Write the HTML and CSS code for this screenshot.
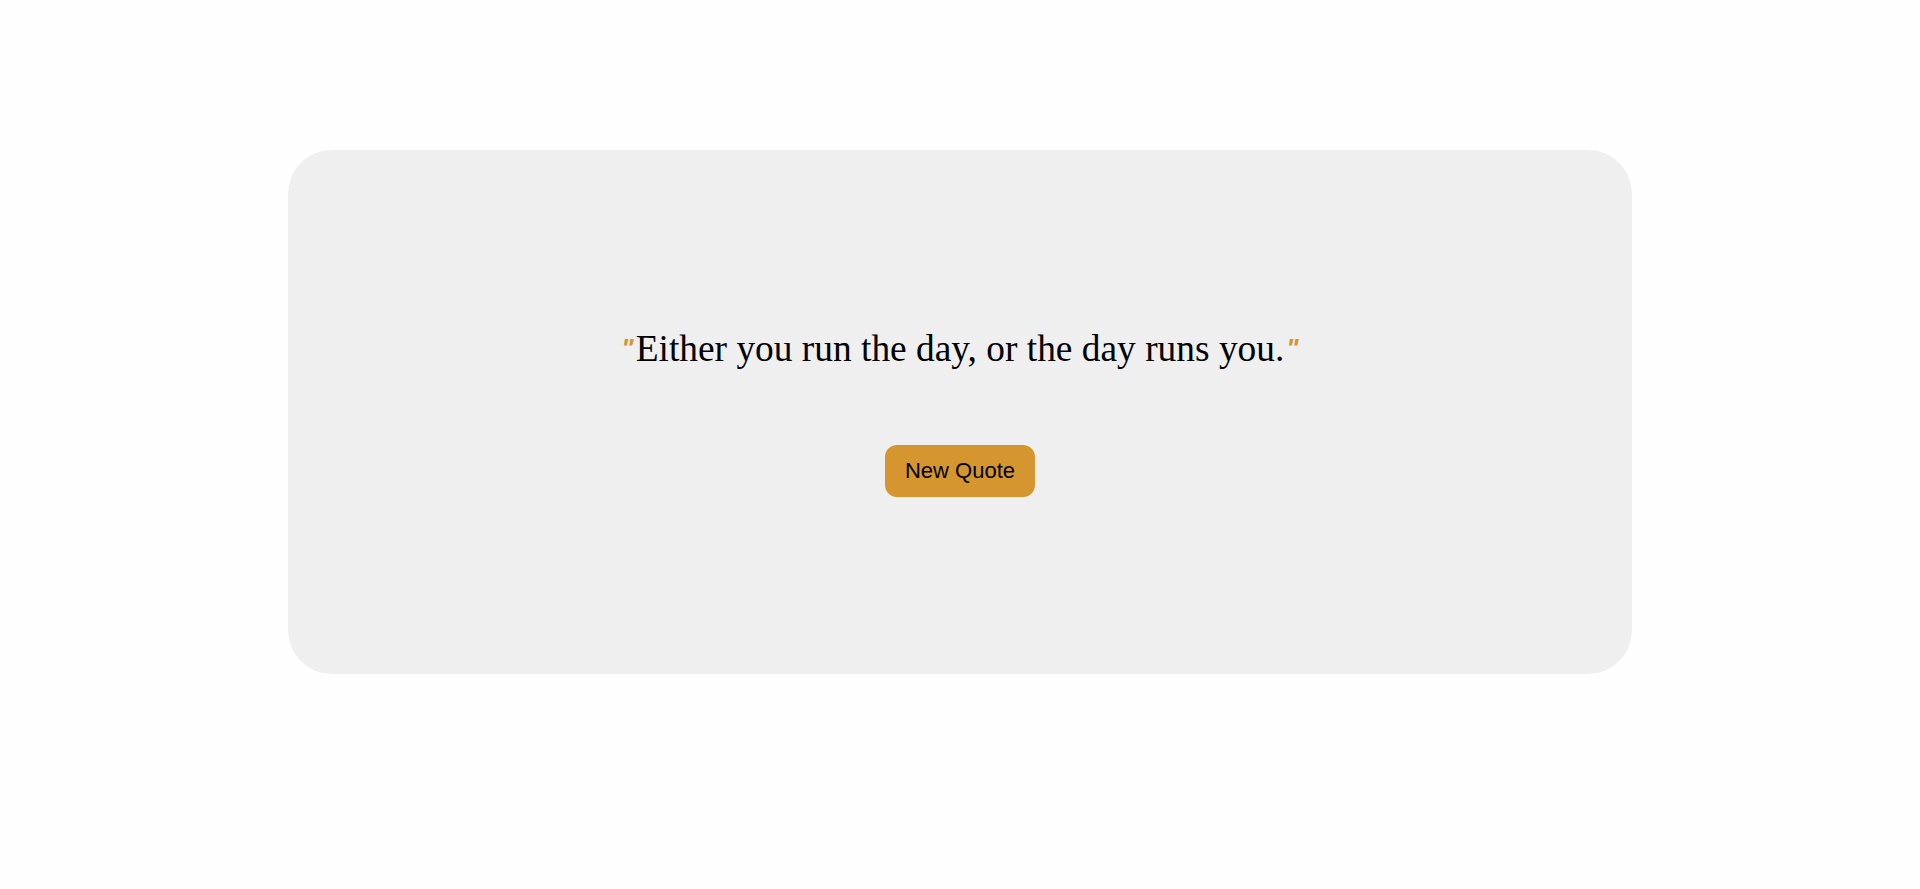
FILE: index.html
```html
<!DOCTYPE html>
<html lang="en">
<head>
<meta charset="utf-8">
<title>Quote Generator</title>
<link rel="stylesheet" href="styles.css">
</head>
<body>
<main class="card">
  <p class="quote"><span class="mark">"</span>Either you run the day, or the day runs you.<span class="mark">"</span></p>
  <button class="btn">New Quote</button>
</main>
</body>
</html>
```

FILE: styles.css
```css
html, body {
  margin: 0;
  padding: 0;
  background: #fefefe;
}
body {
  padding-top: 150px;
}
.card {
  width: 1344px;
  height: 524px;
  margin: 0 auto;
  background: #efefef;
  border-radius: 44px;
  display: flex;
  flex-direction: column;
  align-items: center;
  justify-content: center;
  gap: 74px;
  box-sizing: border-box;
}
.quote {
  margin: 0;
  font-family: "Liberation Serif", "Times New Roman", serif;
  font-size: 37.4px;
  color: #000;
  line-height: 1.15;
}
.mark {
  color: #d4952e;
  font-family: "Liberation Sans", Arial, sans-serif;
  font-style: italic;
  font-weight: bold;
  font-size: 26px;
  padding: 0 2px;
  vertical-align: 4px;
}
.btn {
  font-family: "Liberation Sans", Arial, sans-serif;
  font-size: 22px;
  color: #000;
  background: #d5962f;
  border: none;
  border-radius: 12px;
  padding: 13px 20px;
  line-height: 26px;
  cursor: pointer;
}
```
